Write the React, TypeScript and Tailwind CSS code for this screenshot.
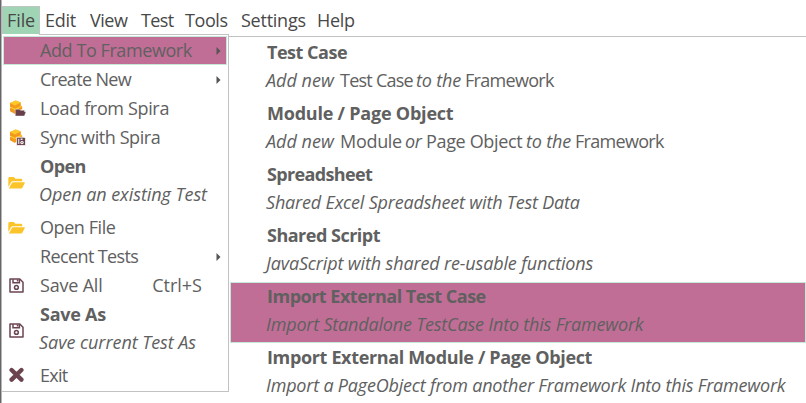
import type { ReactNode } from "react";

function SpiraIcon({ save }: { save?: boolean }) {
  return (
    <svg width="17" height="17" viewBox="0 0 17 17" className="shrink-0">
      <path d="M1 3 6.8.4 11.8 2.6V5.4L13.2 6.4V9L7 12.8 6 14 1 11.2V8.2L2.2 7.6 1 6.8Z" fill="#f39a1c" />
      <path d="M1 3 6.8.4 11.8 2.6 6 5.6Z" fill="#ffc928" />
      <path d="M1 7.6 6 10.2 13.2 6.4 12 5.8 6 8.8 2.4 7Z" fill="#ffc928" />
      {save ? (
        <>
          <path d="M7.6 8.3h7.6l1.3 1.3v6.9H7.6Z" fill="#6b4450" stroke="#fff" strokeWidth=".7" />
          <path d="M9.2 9.7h1.1v5.3H9.2ZM11.6 9.5h1.9v1.5h-1.9Z" fill="#eee" />
          <circle cx="13" cy="13.6" r="1.7" fill="#fff" />
          <circle cx="13" cy="13.6" r=".7" fill="#6b4450" />
        </>
      ) : (
        <path d="M6.3 9.3h4.2l1 1h4v1.4H17l-1.6 4.3H6.3Z" fill="#673f4b" stroke="#fff" strokeWidth=".4" />
      )}
    </svg>
  );
}

function FolderIcon() {
  return (
    <svg width="18" height="14" viewBox="0 0 18 14" className="-ml-px shrink-0">
      <path d="M.3 11V2.4Q.3 1 1.7 1h4l1.8 1.8h5.4q1.4 0 1.4 1.4v1.1H4.6q-1 0-1.5.9Z" fill="#fcc42b" />
      <path d="M.8 12.6 4 6.8q.3-.6 1.2-.6h11q1.1 0 .6.9l-2.5 4.6q-.5.9-1.5.9Z" fill="#fcc42b" />
    </svg>
  );
}

function SaveIcon() {
  return (
    <svg width="15" height="15" viewBox="0 0 15 15" fill="none" stroke="#6b4450" strokeWidth="1.5" className="shrink-0">
      <path d="M1 1h9.8L14 4.2V14H1Z" strokeLinejoin="round" />
      <path d="M4 1.2v3.6h6.4V1.2" />
      <path d="M7.8 1.5h1.5v2H7.8Z" fill="#6b4450" stroke="none" />
      <circle cx="7.4" cy="9.4" r="1.9" />
    </svg>
  );
}

function ExitIcon() {
  return (
    <svg width="16" height="16" viewBox="0 0 16 16" className="-mt-px shrink-0">
      <path d="M2.6 3 12.4 12.6M12.4 3 2.6 12.6" stroke="#6b4450" strokeWidth="4.4" strokeLinecap="round" />
    </svg>
  );
}

function Arrow() {
  return (
    <svg width="5" height="8" viewBox="0 0 5 8" className="ml-auto mr-[5px]">
      <path d="M.5 0 4.5 4 .5 8Z" fill="#555" />
    </svg>
  );
}

function Row({ icon, label, track, arrow, active, shortcut }: {
  icon?: ReactNode; label: string; track: string; arrow?: boolean; active?: boolean; shortcut?: string;
}) {
  return (
    <div className={`flex h-[29px] shrink-0 items-center border pl-[5px] ${active ? "border-[#c5e9d6] bg-[#c06e96]" : "border-transparent"}`}>
      <div className="flex w-[31px] shrink-0 items-center">{icon}</div>
      <span className={`pb-px ${track}`}>{label}</span>
      {shortcut && <span className="ml-auto mr-[24px] pb-px">{shortcut}</span>}
      {arrow && <Arrow />}
    </div>
  );
}

function TallRow({ icon, title, titleTrack, sub }: { icon: ReactNode; title: string; titleTrack: string; sub: string }) {
  return (
    <div className="flex h-[61px] shrink-0 items-center pl-[6px]">
      <div className="flex w-[31px] shrink-0 items-center">{icon}</div>
      <div className="flex flex-col pb-[5px]">
        <b className={`h-[28px] ${titleTrack}`}>{title}</b>
        <i className="-ml-px h-[28px] tracking-[-0.05px]">{sub}</i>
      </div>
    </div>
  );
}

function Entry({ title, track, active, children }: { title: string; track: string; active?: boolean; children: ReactNode }) {
  return (
    <div className={`flex h-[61px] shrink-0 flex-col border pl-[35px] ${active ? "border-[#c5e9d6] bg-[#c06e96]" : "border-transparent"}`}>
      <b className={`-mt-px h-[28px] pl-px ${track}`}>{title}</b>
      <div className="flex h-[28px] italic">{children}</div>
    </div>
  );
}

export default function App() {
  return (
    <div className="flex h-[403px] w-[806px] overflow-hidden whitespace-nowrap bg-white font-['Open_Sans','Noto_Sans',sans-serif] text-[18px] leading-[28px] text-[#606060]">
      <div className="w-[2px] shrink-0 border-r border-[#b5b5b5] bg-[#66666c]" />
      <div className="flex min-w-0 flex-1 flex-col">
        <div className="flex h-[34px] shrink-0 pt-[6px] text-[#484848]">
          <div className="w-[38px] border border-b-0 border-[#bdc5c0] bg-[#9fd5b5] pl-[4px] leading-[26px] tracking-[-0.1px]">File</div>
          <div className="w-[50px] pl-[5px] tracking-[-0.3px]">Edit</div>
          <div className="w-[51px] tracking-[-0.5px]">View</div>
          <div className="w-[44px] tracking-[-0.6px]">Test</div>
          <div className="w-[56px] tracking-[-0.4px]">Tools</div>
          <div className="w-[76px] tracking-[-0.25px]">Settings</div>
          <div className="tracking-[-0.3px]">Help</div>
        </div>
        <div className="flex h-[369px]">
          <div className="flex h-[358px] w-[227px] shrink-0 flex-col border-b border-r border-[#c2c2c2]">
            <div className="ml-[37px] h-px shrink-0 bg-[#c2c2c2]" />
            <div className="flex flex-col pl-px pr-px pt-px">
              <Row label="Add To Framework" track="tracking-[-0.42px]" arrow active />
              <Row label="Create New" track="tracking-[-0.65px]" arrow />
              <Row icon={<SpiraIcon />} label="Load from Spira" track="tracking-[-0.35px]" />
              <Row icon={<SpiraIcon save />} label="Sync with Spira" track="tracking-[-0.42px]" />
              <TallRow icon={<FolderIcon />} title="Open" titleTrack="tracking-[-0.6px]" sub="Open an existing Test" />
              <Row icon={<FolderIcon />} label="Open File" track="tracking-[-0.42px]" />
              <Row label="Recent Tests" track="tracking-[-0.62px]" arrow />
              <Row icon={<SaveIcon />} label="Save All" track="tracking-[-0.2px]" shortcut="Ctrl+S" />
              <TallRow icon={<SaveIcon />} title="Save As" titleTrack="tracking-[-0.25px]" sub="Save current Test As" />
              <Row icon={<ExitIcon />} label="Exit" track="tracking-[-0.7px]" />
            </div>
          </div>
          <div className="flex min-w-0 flex-1 flex-col pt-[2px]">
            <div className="flex flex-col border-t border-[#c2c2c2] pl-[1px] pt-px">
              <Entry title="Test Case" track="tracking-[-0.48px]">
                <span className="w-[74px]">Add new</span>
                <span className="w-[76px] not-italic tracking-[-0.75px]">Test Case</span>
                <span className="w-[49px] tracking-[-0.15px]">to the</span>
                <span className="not-italic tracking-[-0.7px]">Framework</span>
              </Entry>
              <Entry title="Module / Page Object" track="tracking-[-0.22px]">
                <span className="w-[74px]">Add new</span>
                <span className="w-[65px] not-italic tracking-[-0.3px]">Module</span>
                <span className="w-[21px] tracking-[-0.3px]">or</span>
                <span className="w-[100px] not-italic tracking-[-0.35px]">Page Object</span>
                <span className="w-[49px] tracking-[-0.15px]">to the</span>
                <span className="not-italic tracking-[-0.7px]">Framework</span>
              </Entry>
              <Entry title="Spreadsheet" track="tracking-[-0.65px]">
                <span className="tracking-[-0.18px]">Shared Excel Spreadsheet with Test Data</span>
              </Entry>
              <Entry title="Shared Script" track="tracking-[-0.5px]">
                <span className="tracking-[-0.14px]">JavaScript with shared re-usable functions</span>
              </Entry>
              <Entry title="Import External Test Case" track="tracking-[-0.5px]" active>
                <span className="tracking-[-0.19px]">Import Standalone TestCase Into this Framework</span>
              </Entry>
              <Entry title="Import External Module / Page Object" track="tracking-[-0.35px]">
                <span className="tracking-[-0.2px]">Import a PageObject from another Framework Into this Framework</span>
              </Entry>
            </div>
          </div>
        </div>
      </div>
    </div>
  );
}
